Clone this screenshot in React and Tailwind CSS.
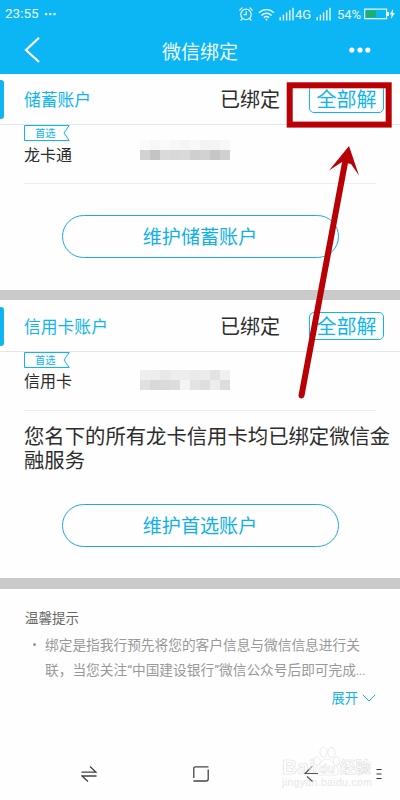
const BLUE = '#0fb5f2';

function Signal({ bars = 5 }) {
  return (
    <svg width="16" height="14" viewBox="0 0 16 14" fill="#e8f9ff" className="shrink-0">
      {Array.from({ length: bars }, (_, i) => (
        <rect key={i} x={i * 3.2 + 0.5} y={10 - i * 2.3} width="1.4" height={3.5 + i * 2.3} />
      ))}
    </svg>
  );
}

function StatusBar() {
  return (
    <div className="flex h-7 items-center pl-[5px] pr-[5px] text-[#e8f9ff]">
      <span className="w-[38px] font-['Roboto',sans-serif] text-[13.5px] leading-none">23:55</span>
      <svg width="11" height="3" viewBox="0 0 11 3" fill="#e8f9ff" className="ml-[2px]">
        <rect width="2.2" height="2.2" x="0" y="0" />
        <rect width="2.2" height="2.2" x="4.2" y="0" />
        <rect width="2.2" height="2.2" x="8.4" y="0" />
      </svg>
      <div className="ml-auto flex items-center">
        <svg width="14" height="14" viewBox="0 0 14 14" fill="none" stroke="#e8f9ff" strokeWidth="1.2" strokeLinecap="round">
          <circle cx="7" cy="7.4" r="5.2" />
          <path d="M7.2 4.5v3.2H5M.8 3.2 3 1M13.2 3.2 11 1M3 12l-1 1.2M11 12l1 1.2" />
        </svg>
        <svg width="17" height="13" viewBox="0 0 17 13" fill="none" stroke="#e8f9ff" strokeWidth="1.4" className="ml-[5px]">
          <path d="M1 4.8a10.5 10.5 0 0 1 15 0M3.4 7.4a7 7 0 0 1 10.2 0M5.8 9.7a4 4 0 0 1 5.4 0" />
          <circle cx="8.5" cy="11.6" r="1" fill="#e8f9ff" stroke="none" />
        </svg>
        <span className="ml-1 flex"><Signal /></span>
        <span className="w-[18px] font-['Roboto',sans-serif] text-[13px] leading-none">4G</span>
        <span className="ml-[3px] flex"><Signal /></span>
        <span className="ml-[5px] w-[25px] whitespace-nowrap font-['Roboto',sans-serif] text-[13px] leading-none">54%</span>
        <svg width="31" height="12" viewBox="0 0 31 12" className="ml-[2px]">
          <rect x=".6" y="1.1" width="22" height="9.6" fill="none" stroke="#e8f9ff" strokeWidth="1.2" />
          <rect x="2" y="2.5" width="10" height="6.8" fill="#1fad68" />
          <path d="M23 4h2v4h-2zM29 1l-3.4 5.6h2L27 11l3.8-6h-2z" fill="#e8f9ff" />
        </svg>
      </div>
    </div>
  );
}

function NavBar() {
  return (
    <div className="grid h-11 grid-cols-3 items-center">
      <svg width="16" height="26" viewBox="0 0 16 26" fill="none" stroke="#fff" strokeWidth="2.2" className="ml-6">
        <path d="M15 .8 2 13l13 12" />
      </svg>
      <h1 className="whitespace-nowrap text-center text-[19px] leading-none text-[#f0fbff]">微信绑定</h1>
      <svg width="22" height="6" viewBox="0 0 22 6" fill="#fff" className="ml-auto mr-[29px]">
        <circle cx="2.8" cy="3" r="2.6" />
        <circle cx="11" cy="3" r="2.6" />
        <circle cx="18.8" cy="3" r="2.6" />
      </svg>
    </div>
  );
}

function Mosaic({ rows }) {
  return (
    <div className="grid grid-cols-9">
      {rows.flat().map((c, i) => (
        <span key={i} className="size-[10px]" style={{ background: c }} />
      ))}
    </div>
  );
}

function PreferredTag() {
  return (
    <div className="relative h-4 w-[46px]">
      <svg width="46" height="16" viewBox="0 0 46 16" fill="none" stroke={BLUE} strokeWidth="1" className="absolute inset-0">
        <path d="M.5.5H45.2L40 8l5.2 7.5H.5z" />
      </svg>
      <span className="block pl-[11px] text-[10.3px] leading-4 text-[#0fb5f2]">首选</span>
    </div>
  );
}

function Account({ title, name, rows, rowClass, mosaicClass, children, button }) {
  return (
    <section>
      <div className="flex h-[51px] items-center border-b border-[#e6e6e6]">
        <span className="h-[39px] w-1 rounded-r-[3px] bg-[#0fb5f2]" />
        <span className="ml-5 text-[16.8px] leading-none text-[#0fb5f2]">{title}</span>
        <span className="ml-auto text-[20px] leading-none text-[#2c2c2c]">已绑定</span>
        <span className="ml-[29px] mr-4 flex h-7 w-[75px] items-center justify-center rounded-[5px] border border-[#0fb5f2] text-[20px] leading-none text-[#0fb5f2]">
          全部解
        </span>
      </div>
      <div className="ml-6 mr-6 h-[59px] border-b border-[#eeeeee]">
        <PreferredTag />
        <div className={`flex items-center ${rowClass}`}>
          <span className="w-[116px] text-[16px] leading-none text-[#2c2c2c]">{name}</span>
          <div className={mosaicClass}>
            <Mosaic rows={rows} />
          </div>
        </div>
      </div>
      {children}
      <div className="flex justify-center">
        <button className="h-[43px] w-[277px] rounded-full border border-[#1cabe0] text-[19.1px] leading-none text-[#0fb0ea]">
          {button}
        </button>
      </div>
    </section>
  );
}

const SAVINGS = [
  ['#fafafa', '#f7f7f7', '#fafafa', '#f7f7f7', '#f5f5f5', '#f8f8f8', '#f3f3f3', '#f4f4f4', '#f7f7f7'],
  ['#d2d2d2', '#c4c4c4', '#dadada', '#d8d8d8', '#d9d9d9', '#cfcfcf', '#d2d2d2', '#c6c6c6', '#d0d0d0'],
];
const CREDIT = [
  ['#eeeeee', '#ededed', '#e8e8e8', '#ededed', '#ededed', '#eaeaea', '#ebebeb', '#e3e3e3', '#f0f0f0'],
  ['#e0e0e0', '#d8d8d8', '#dadada', '#dcdcdc', '#f4f4f4', '#e3e3e3', '#dedede', '#ededed', '#dddddd'],
];

function Tips() {
  return (
    <section className="pl-[25px] pr-6 pt-5">
      <h2 className="text-[13.5px] leading-4 text-[#666]">温馨提示</h2>
      <div className="mt-[7px] flex text-[13.7px] leading-[25px] text-[#999]">
        <span className="ml-2 mt-[11px] size-[3px] shrink-0 rounded-full bg-[#999]" />
        <p className="ml-[9px] whitespace-nowrap">
          绑定是指我行预先将您的客户信息与微信信息进行关
          <br />
          联，当您关注<span className="font-['Roboto',sans-serif]">“</span>中国建设银行<span className="font-['Roboto',sans-serif]">”</span>微信公众号后即可完成<span className="font-['Roboto',sans-serif] text-[12px]">...</span>
        </p>
      </div>
      <div className="mt-[6px] flex items-center justify-end">
        <span className="text-[13.3px] leading-4 text-[#0fb0ea]">展开</span>
        <svg width="14" height="8" viewBox="0 0 14 8" fill="none" stroke={BLUE} strokeWidth="1" className="ml-1">
          <path d="M.8.8 7 7l6.2-6.2" />
        </svg>
      </div>
    </section>
  );
}

function Watermark() {
  return (
    <svg width="94" height="46" viewBox="0 0 94 46" className="absolute left-[281px] top-[744px]" fill="#fff" stroke="#dfdfdf" strokeWidth="0.6">
      <ellipse cx="36" cy="17" rx="3.2" ry="4.2" />
      <ellipse cx="42.5" cy="8" rx="3.6" ry="5" />
      <ellipse cx="50.5" cy="8.5" rx="3.6" ry="5" />
      <ellipse cx="55.5" cy="17" rx="3.2" ry="4.2" />
      <path d="M46 15c-4 0-5.5 4-9 7-5 4-3 9 1 9h16c5 0 5-5 1-9-3.5-3-5-7-9-7z" />
      <text x="1" y="30" fontFamily="Liberation Sans, sans-serif" fontWeight="700" fontSize="21" textLength="33">Bai</text>
      <text x="38" y="29" fontFamily="Liberation Sans, sans-serif" fontWeight="700" fontSize="13">du</text>
      <text x="59" y="29" fontFamily="Noto Sans CJK SC, sans-serif" fontWeight="700" fontSize="15.5">经验</text>
      <text x="1" y="42" fontFamily="Liberation Sans, sans-serif" fontSize="10.5" textLength="90" stroke="none" fill="#e6e6e6">jingyan.baidu.com</text>
    </svg>
  );
}

function SystemNav() {
  return (
    <nav className="mt-auto flex h-[52px] items-center pl-[81px]">
      <svg width="16" height="18" viewBox="0 0 16 18" fill="none" stroke="#444" strokeWidth="1.3">
        <path d="M.5 7.2H15L9 1.5M15.5 11H1l6 5.5" />
      </svg>
      <svg width="16" height="16" viewBox="0 0 16 16" fill="none" stroke="#444" strokeWidth="1.3" className="ml-[96px]">
        <path d="M.8 12V2.5Q.8.8 2.5.8H15.5M15.2 3.5v9.5q0 2-2 2H.5" />
      </svg>
      <svg width="14" height="18" viewBox="0 0 14 18" fill="none" strokeWidth="1.2" className="relative z-10 ml-[95px]">
        <path d="M8.5 1 5 4.5" stroke="#aaa" />
        <path d="M5 4.5 1 8.5h13M3 11.5l5.500 5" stroke="#555" />
      </svg>
      <svg width="6" height="12" viewBox="0 0 6 12" stroke="#333" strokeWidth="1.2" className="ml-[58px]">
        <path d="M.5 1.5h5M.5 6h5M.5 10.5h5" />
      </svg>
    </nav>
  );
}

function Annotation() {
  return (
    <svg width="400" height="800" viewBox="0 0 400 800" className="pointer-events-none absolute left-0 top-0">
      <rect x="289.7" y="85.3" width="99" height="39.3" fill="none" stroke="#b90005" strokeWidth="6" />
      <path d="M301.5 395.5 345.5 160" stroke="#b90005" strokeWidth="6" strokeLinecap="round" />
      <path d="M349 146 329 170.5 342 162 351 164 359 175.5z" fill="#b90005" />
    </svg>
  );
}

export default function App() {
  return (
    <div className="relative flex h-[800px] w-[400px] flex-col overflow-hidden bg-[#fefefe] font-['Noto_Sans_CJK_SC',sans-serif]">
      <header className="h-[74px] bg-[#0cb5f4]">
        <StatusBar />
        <NavBar />
      </header>
      <Account title="储蓄账户" name="龙卡通" rows={SAVINGS} rowClass="h-[26px]" mosaicClass="mb-2" button="维护储蓄账户">
        <div className="h-[31px]" />
      </Account>
      <div className="mt-8 h-[10px] bg-[#cacaca]" />
      <div className="h-px" />
      <Account title="信用卡账户" name="信用卡" rows={CREDIT} rowClass="h-6" mosaicClass="" button="维护首选账户">
        <div className="mb-[33px] ml-6 mt-3 whitespace-nowrap text-[20.35px] leading-6 text-[#2c2c2c]">
          <p>您名下的所有龙卡信用卡均已绑定微信金</p>
          <p>融服务</p>
        </div>
      </Account>
      <div className="mt-[31px] h-[11px] bg-[#cacaca]" />
      <Tips />
      <SystemNav />
      <Watermark />
      <Annotation />
    </div>
  );
}
